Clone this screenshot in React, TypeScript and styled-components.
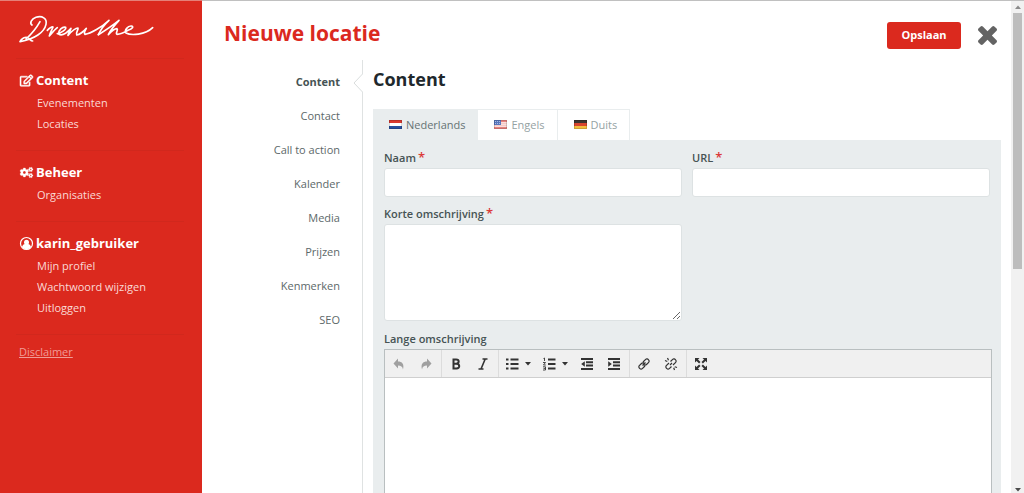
import React from 'react';
import styled, { createGlobalStyle, css } from 'styled-components';
import { FaRegEdit, FaCogs } from 'react-icons/fa';

const GlobalStyle = createGlobalStyle`
  * { box-sizing: border-box; }
  body {
    margin: 0;
    background: #fff;
    color: #465354;
    font-family: "Open Sans", "Noto Sans", sans-serif;
    font-size: 12px;
  }
  button, input, textarea { font: inherit; color: inherit; }
`;

const Page = styled.div`
  display: grid;
  grid-template-columns: 202px minmax(0, 1fr) 13px;
  height: 100vh;
  overflow: hidden;
`;

const Sidebar = styled.aside`
  background: #db291e;
  border-top: 1px solid #e58078;
  padding: 12px 18px 0 16px;
  color: #fff;
`;

const LogoLink = styled.a`
  display: block;
  height: 45px;
  padding-left: 2px;
`;

const Section = styled.section`
  border-top: 1px solid #d1281d;
  padding: 9px 0 16px 4px;
`;

const SectionTitle = styled.h2`
  display: flex;
  align-items: center;
  gap: 3px;
  margin: 0;
  font-size: 13px;
  line-height: 24px;
  font-weight: 700;
  svg { width: 13px; height: 13px; overflow: visible; }
`;

const EditIcon = styled(FaRegEdit)`
  stroke: currentColor;
  stroke-width: 22;
`;

const CogsIcon = styled(FaCogs)`
  stroke: currentColor;
  stroke-width: 14;
`;

const MenuList = styled.ul`
  list-style: none;
  margin: 0;
  padding: 0 0 0 17px;
`;

const MenuLink = styled.a`
  display: block;
  color: #fad9d6;
  font-size: 11px;
  line-height: 21px;
  text-decoration: none;
`;

const Disclaimer = styled.div`
  border-top: 1px solid #d1281d;
  padding: 7px 3px;
  font-size: 11px;
  line-height: 20px;
  a { color: #f09c96; }
`;

const Main = styled.main`
  display: flex;
  flex-direction: column;
  min-width: 0;
  overflow: hidden;
  border-top: 1px solid #c0c0c0;
  padding: 0 10px 0 22px;
`;

const Header = styled.header`
  display: flex;
  align-items: center;
  flex: none;
  gap: 17px;
  height: 59px;
  padding: 0 4px 0 0;
`;

const Title = styled.h1`
  flex: 1;
  margin: 4px 0 0;
  color: #db291e;
  font-size: 21px;
  line-height: 28px;
  font-weight: 700;
`;

const SaveButton = styled.button`
  height: 27px;
  width: 74px;
  margin-top: 10px;
  padding: 0 0 2px;
  border: 0;
  border-radius: 3px;
  background: #db291e;
  color: #fff;
  font-size: 11px;
  font-weight: 700;
`;

const CloseButton = styled.button`
  display: flex;
  margin-top: 10px;
  padding: 0;
  border: 0;
  background: none;
  color: #636363;
`;

const Body = styled.div`
  display: flex;
  flex: 1;
  min-height: 0;
`;

const Steps = styled.nav`
  flex: none;
  width: 139px;
  padding-top: 5px;
  border-right: 1px solid #dfe2e2;
  text-align: right;
`;

const Step = styled.a<{ $active?: boolean }>`
  display: block;
  position: relative;
  padding-right: 22px;
  color: #5c6869;
  font-size: 11px;
  line-height: 34px;
  text-decoration: none;
  ${p => p.$active && css`
    color: #465354;
    font-weight: 700;
  `}
`;

const StepArrow = styled.svg`
  position: absolute;
  right: -1px;
  top: 8px;
`;

const Content = styled.div`
  flex: 1;
  min-width: 0;
  padding-left: 10px;
`;

const ContentTitle = styled.h2`
  margin: 5px 0 16px;
  color: #20282c;
  font-size: 18px;
  line-height: 28px;
  font-weight: 700;
`;

const Tabs = styled.div`
  display: flex;
`;

const Tab = styled.button<{ $active?: boolean }>`
  display: flex;
  align-items: center;
  gap: 4px;
  height: 31px;
  padding: 0 12px 2px 16px;
  border: 1px solid #e9edee;
  border-left-width: 0;
  border-bottom: 0;
  background: #fff;
  color: #95a2a3;
  font-size: 11px;
  ${p => p.$active && css`
    background: #e9edee;
    color: #667374;
  `}
`;

const Panel = styled.div`
  padding: 9px 9px 0 11px;
  background: #e9edee;
`;

const Fields = styled.div`
  display: grid;
  grid-template-columns: 1fr 1fr;
  column-gap: 10px;
  row-gap: 8px;
  padding-right: 2px;
`;

const Field = styled.div`
  display: flex;
  flex-direction: column;
`;

const Label = styled.label`
  color: #465354;
  font-size: 11px;
  line-height: 17px;
  font-weight: 600;
  height: 19px;
`;

const Star = styled.span`
  margin-left: 2px;
  color: #db3a38;
  font-size: 13px;
  line-height: 12px;
`;

const fieldBox = css`
  width: 100%;
  border: 1px solid #dde2e3;
  border-radius: 3px;
  background: #fff;
  outline: 0;
`;

const TextInput = styled.input`
  ${fieldBox}
  height: 29px;
  padding: 0 8px;
`;

const TextArea = styled.textarea`
  ${fieldBox}
  display: block;
  height: 97px;
  padding: 8px;
  resize: both;
`;

const EditorField = styled.div`
  display: flex;
  flex-direction: column;
  margin-top: 9px;
`;

const Editor = styled.div`
  border: 1px solid #b9bfc0;
  background: #fff;
`;

const Toolbar = styled.div`
  display: flex;
  height: 28px;
  background: #f0f0f0;
  border-bottom: 1px solid #cfcfcf;
`;

const ToolGroup = styled.div`
  display: flex;
  align-items: center;
  padding: 0 2px 0 0;
  & + & { border-left: 1px solid #dcdcdc; }
`;

const Tool = styled.button<{ $caret?: boolean; $muted?: boolean }>`
  display: flex;
  align-items: center;
  justify-content: center;
  gap: 6px;
  width: ${p => (p.$caret ? '37px' : '27px')};
  height: 24px;
  padding: 0;
  border: 0;
  background: none;
  color: ${p => (p.$muted ? '#a0a0a0' : '#333')};
`;

const EditArea = styled.textarea`
  display: block;
  width: 100%;
  height: 240px;
  border: 0;
  outline: 0;
  padding: 8px;
  resize: none;
`;

const ScrollTrack = styled.div`
  display: flex;
  flex-direction: column;
  align-items: center;
  border-top: 1px solid #c0c0c0;
  background: #f1f1f1;
`;

const ScrollThumb = styled.div`
  width: 9px;
  height: 52%;
  margin-bottom: auto;
  background: #bdbdbd;
`;

const ScrollArrow = styled.svg`
  flex: none;
  width: 13px;
  height: 12px;
`;

const Logo = () => (
  <svg width="138" height="32" viewBox="54 40 414 96" fill="none" stroke="#fff" strokeWidth="5" strokeLinecap="round" strokeLinejoin="round" role="img" aria-label="Drenthe">
    <path d="M96 76C88 70 94 58 108 53C126 47 142 56 138 74C133 98 104 118 60 126C64 116 76 110 84 114C90 118 92 124 98 124M120 66C110 84 96 102 78 118" />
    <path d="M142 92C148 86 154 80 159 82C156 90 150 100 148 109C156 100 164 90 172 84" />
    <path d="M172 102C182 100 200 90 197 83C188 79 174 93 176 103C186 110 202 98 213 86C211 93 205 101 204 107C212 98 224 85 234 85C236 90 226 100 230 106C240 104 252 94 259 86C256 92 250 100 255 104C272 102 306 82 327 62C314 74 302 90 295 105" />
    <path d="M295 105C316 92 342 74 357 62C346 74 332 90 325 105C333 96 344 87 351 87C356 91 345 101 351 104C362 104 374 98 384 92C398 87 402 80 394 79C384 78 372 92 378 100C392 108 436 106 458 84" />
  </svg>
);

const UserIcon = () => (
  <svg viewBox="0 0 26 26" aria-hidden="true">
    <circle cx="13" cy="13" r="12" fill="none" stroke="currentColor" strokeWidth="2.400" />
    <circle cx="13" cy="10.500" r="5" fill="currentColor" />
    <path d="M4 20C5 16 7.500 14 10 14H16C18.500 14 21 16 22 20C17.500 26 8.500 26 4 20Z" fill="currentColor" />
  </svg>
);

const Flag = ({ kind }: { kind: 'nl' | 'us' | 'de' }) => {
  const stripes = {
    nl: ['#d8392f', '#ffffff', '#26519f'],
    us: ['#e7837f', '#f5c9c6', '#e7837f'],
    de: ['#3b3431', '#d8452f', '#f2bd3f'],
  }[kind];
  return (
    <svg width="13" height="9" viewBox="0 0 13 9" aria-hidden="true">
      {stripes.map((c, i) => <rect key={c + i} y={i * 3} width="13" height="3" fill={c} />)}
      {kind === 'us' && (
        <>
          <path d="M0 2.5H13M0 4.5H13M0 6.5H13" stroke="#f9dedc" />
          <rect width="7" height="5" fill="#5776bd" />
          <path d="M1 1.5H6M1 3.5H6" stroke="#a9b9e0" strokeDasharray="1 1" />
        </>
      )}
      <rect x=".5" y=".5" width="12" height="8" fill="none" stroke="#000" strokeOpacity=".15" />
    </svg>
  );
};

const Icon = ({ children }: { children: React.ReactNode }) => (
  <svg width="14" height="14" viewBox="0 0 14 14" fill="none" stroke="currentColor" strokeWidth="2" aria-hidden="true">{children}</svg>
);

const Caret = () => (
  <svg width="6" height="4" viewBox="0 0 6 4" aria-hidden="true"><path d="M0 0H6L3 3.5Z" fill="currentColor" /></svg>
);

const undoPath = 'M6 1.5V4.5C10 4.5 12.5 7 11 12.5C10.5 9.500 9 8.500 6 8.500V11.500L1.500 6.500Z';

const icons = {
  undo: <path d={undoPath} fill="currentColor" stroke="none" />,
  redo: <path d={undoPath} transform="matrix(-1 0 0 1 14 0)" fill="currentColor" stroke="none" />,
  bold: <path d="M4.500 2.500V11.500M3.500 2.500H7.200C10.500 2.500 10.500 6.700 7.200 6.700H4.500M7.200 6.700C11.200 6.700 11.200 11.500 7.500 11.500H3.500" />,
  italic: <path d="M6.500 2H11.500M2.500 12H7.500M9.200 2L5 12" strokeWidth="1.600" />,
  bullets: <path d="M1 2.500H3.500M1 7H3.500M1 11.500H3.500M5.500 2.500H13.500M5.500 7H13.500M5.500 11.500H13.500" />,
  numbers: (
    <>
      <path d="M6 2.500H13.500M6 7H13.500M6 11.500H13.500" />
      <path d="M1.500 1.500L2.500 1V4M1 5.500H3.500L1.500 8H3.800M1 9.800H3.500V13H1M1.500 11.400H3.500" strokeWidth=".9" />
    </>
  ),
  outdent: (
    <>
      <path d="M1 2H13M6 5.300H13M6 8.600H13M1 12H13" />
      <path d="M4.800 4.300V9.700L1.200 7Z" fill="currentColor" stroke="none" />
    </>
  ),
  indent: (
    <>
      <path d="M1 2H13M6 5.300H13M6 8.600H13M1 12H13" />
      <path d="M1.200 4.300V9.700L4.800 7Z" fill="currentColor" stroke="none" />
    </>
  ),
  link: <path d="M5.500 8.500L8.500 5.500M6 5L8.700 2.300C10.300 .7 13.300 3.700 11.700 5.300L9.500 7.500C8.500 8.500 7.300 8.200 6.700 7.500M8 9L5.300 11.700C3.700 13.300 .7 10.300 2.300 8.700L4.500 6.500C5.500 5.500 6.700 5.800 7.300 6.500" strokeWidth="1.200" />,
  unlink: <path d="M6.500 4.500L8.700 2.300C10.300 .7 13.300 3.700 11.700 5.300L9 8M7.500 9.500L5.300 11.700C3.700 13.300 .7 10.300 2.300 8.700L5 6M3.500 1L4.500 3.300M1 3.500L3.300 4.500M10.500 13L9.700 10.700M13 10.500L10.700 9.700M6 8L8 6" strokeWidth="1.200" />,
  fullscreen: (
    <>
      <path d="M2.500 2.500L5.800 5.800M11.500 2.500L8.200 5.800M2.500 11.500L5.800 8.200M11.500 11.500L8.200 8.200" />
      <path d="M1 1H5.500L1 5.500ZM13 1V5.500L8.500 1ZM1 13V8.500L5.500 13ZM13 13H8.500L13 8.500Z" fill="currentColor" stroke="none" />
    </>
  ),
};

type ToolDef = { name: string; icon: keyof typeof icons; caret?: boolean; muted?: boolean };

const toolGroups: ToolDef[][] = [
  [{ name: 'Ongedaan maken', icon: 'undo', muted: true }, { name: 'Opnieuw', icon: 'redo', muted: true }],
  [{ name: 'Vet', icon: 'bold' }, { name: 'Cursief', icon: 'italic' }],
  [
    { name: 'Opsomming', icon: 'bullets', caret: true },
    { name: 'Nummering', icon: 'numbers', caret: true },
    { name: 'Inspringing verkleinen', icon: 'outdent' },
    { name: 'Inspringing vergroten', icon: 'indent' },
  ],
  [{ name: 'Link invoegen', icon: 'link' }, { name: 'Link verwijderen', icon: 'unlink' }],
  [{ name: 'Volledig scherm', icon: 'fullscreen' }],
];

const menu = [
  { title: 'Content', icon: <EditIcon />, items: ['Evenementen', 'Locaties'] },
  { title: 'Beheer', icon: <CogsIcon />, items: ['Organisaties'] },
  { title: 'karin_gebruiker', icon: <UserIcon />, items: ['Mijn profiel', 'Wachtwoord wijzigen', 'Uitloggen'] },
];

const steps = ['Content', 'Contact', 'Call to action', 'Kalender', 'Media', 'Prijzen', 'Kenmerken', 'SEO'];

export default function App() {
  return (
    <>
      <GlobalStyle />
      <Page>
        <Sidebar>
          <LogoLink href="#"><Logo /></LogoLink>
          {menu.map(group => (
            <Section key={group.title}>
              <SectionTitle>{group.icon}{group.title}</SectionTitle>
              <MenuList>
                {group.items.map(item => <li key={item}><MenuLink href="#">{item}</MenuLink></li>)}
              </MenuList>
            </Section>
          ))}
          <Disclaimer><a href="#">Disclaimer</a></Disclaimer>
        </Sidebar>

        <Main>
          <Header>
            <Title>Nieuwe locatie</Title>
            <SaveButton type="button">Opslaan</SaveButton>
            <CloseButton type="button" aria-label="Sluiten">
              <svg width="19" height="19" viewBox="302 366 1188 1188" fill="currentColor" aria-hidden="true">
                <path d="M1490 1322q0 40-28 68l-136 136q-28 28-68 28t-68-28l-294-294-294 294q-28 28-68 28t-68-28l-136-136q-28-28-28-68t28-68l294-294-294-294q-28-28-28-68t28-68l136-136q28-28 68-28t68 28l294 294 294-294q28-28 68-28t68 28l136 136q28 28 28 68t-28 68l-294 294 294 294q28 28 28 68z" />
              </svg>
            </CloseButton>
          </Header>

          <Body>
            <Steps>
              {steps.map((step, i) => (
                <Step key={step} href="#" $active={i === 0}>
                  {step}
                  {i === 0 && (
                    <StepArrow width="10" height="20" viewBox="0 0 10 20" aria-hidden="true">
                      <path d="M10 1L9.500 1L1 10L9.500 19H10Z" fill="#fff" />
                      <path d="M9.500 1L1 10L9.500 19" fill="none" stroke="#d9dddd" />
                    </StepArrow>
                  )}
                </Step>
              ))}
            </Steps>

            <Content>
              <ContentTitle>Content</ContentTitle>
              <Tabs role="tablist">
                <Tab type="button" role="tab" aria-selected="true" $active><Flag kind="nl" />Nederlands</Tab>
                <Tab type="button" role="tab" aria-selected="false"><Flag kind="us" />Engels</Tab>
                <Tab type="button" role="tab" aria-selected="false"><Flag kind="de" />Duits</Tab>
              </Tabs>
              <Panel>
                <Fields>
                  <Field>
                    <Label htmlFor="naam">Naam<Star>*</Star></Label>
                    <TextInput id="naam" type="text" />
                  </Field>
                  <Field>
                    <Label htmlFor="url">URL<Star>*</Star></Label>
                    <TextInput id="url" type="text" />
                  </Field>
                  <Field>
                    <Label htmlFor="kort">Korte omschrijving<Star>*</Star></Label>
                    <TextArea id="kort" />
                  </Field>
                </Fields>
                <EditorField>
                  <Label htmlFor="lang">Lange omschrijving</Label>
                  <Editor>
                    <Toolbar role="toolbar">
                      {toolGroups.map((group, i) => (
                        <ToolGroup key={i}>
                          {group.map(t => (
                            <Tool key={t.icon} type="button" aria-label={t.name} $caret={t.caret} $muted={t.muted}>
                              <Icon>{icons[t.icon]}</Icon>
                              {t.caret && <Caret />}
                            </Tool>
                          ))}
                        </ToolGroup>
                      ))}
                    </Toolbar>
                    <EditArea id="lang" />
                  </Editor>
                </EditorField>
              </Panel>
            </Content>
          </Body>
        </Main>

        <ScrollTrack aria-hidden="true">
          <ScrollArrow viewBox="0 0 13 12"><path d="M4 8H10L7 4.500Z" fill="#8a8a8a" /></ScrollArrow>
          <ScrollThumb />
          <ScrollArrow viewBox="0 0 13 12"><path d="M4 7H10L7 10.500Z" fill="#4a4a4a" /></ScrollArrow>
        </ScrollTrack>
      </Page>
    </>
  );
}
